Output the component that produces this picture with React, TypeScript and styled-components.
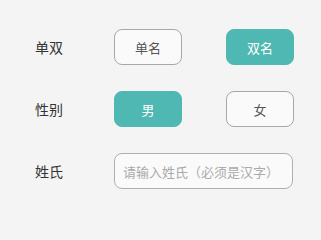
import React, { useState } from 'react';
import styled, { createGlobalStyle } from 'styled-components';

const GlobalStyle = createGlobalStyle`
  html, body {
    margin: 0;
    padding: 0;
    background: #f4f4f4;
    font-family: "Noto Sans CJK SC", "Noto Sans", sans-serif;
  }
`;

const TEAL = '#4fb8b2';

function App() {
  const [nameType, setNameType] = useState<'single' | 'double'>('double');
  const [gender, setGender] = useState<'male' | 'female'>('male');
  const [surname, setSurname] = useState<string>('');

  return (
    <>
      <GlobalStyle />
      <Form>
        <Row>
          <Label>单双</Label>
          <Options>
            <Choice $active={nameType === 'single'} onClick={() => setNameType('single')}>单名</Choice>
            <Choice $active={nameType === 'double'} onClick={() => setNameType('double')}>双名</Choice>
          </Options>
        </Row>
        <Row>
          <Label>性别</Label>
          <Options>
            <Choice $active={gender === 'male'} onClick={() => setGender('male')}>男</Choice>
            <Choice $active={gender === 'female'} onClick={() => setGender('female')}>女</Choice>
          </Options>
        </Row>
        <Row>
          <Label>姓氏</Label>
          <Input
            type="text"
            placeholder="请输入姓氏（必须是汉字）"
            value={surname}
            onChange={(e) => setSurname(e.target.value)}
          />
        </Row>
      </Form>
    </>
  );
}

export default App;

const Form = styled.div`
  display: flex;
  flex-direction: column;
  gap: 26px;
  padding: 29px 0 0 35px;
`;

const Row = styled.div`
  display: flex;
  align-items: center;
  height: 36px;
`;

const Label = styled.span`
  width: 79px;
  font-size: 14px;
  color: #333;
`;

const Options = styled.div`
  display: flex;
  gap: 44px;
`;

const Choice = styled.button<{ $active: boolean }>`
  box-sizing: border-box;
  width: 68px;
  height: 36px;
  border-radius: 8px;
  border: 1px solid ${(p) => (p.$active ? TEAL : '#a8a8a8')};
  background: ${(p) => (p.$active ? TEAL : '#fafafa')};
  color: ${(p) => (p.$active ? '#fff' : '#555')};
  font-family: inherit;
  font-size: 13px;
  padding: 0;
  cursor: pointer;
`;

const Input = styled.input`
  box-sizing: border-box;
  width: 179px;
  height: 36px;
  padding: 0 8px;
  border-radius: 8px;
  border: 1px solid #b0b0b0;
  background: #fafafa;
  font-family: inherit;
  font-size: 13px;
  color: #333;
  outline: none;

  &::placeholder {
    color: #aaa;
  }
`;
